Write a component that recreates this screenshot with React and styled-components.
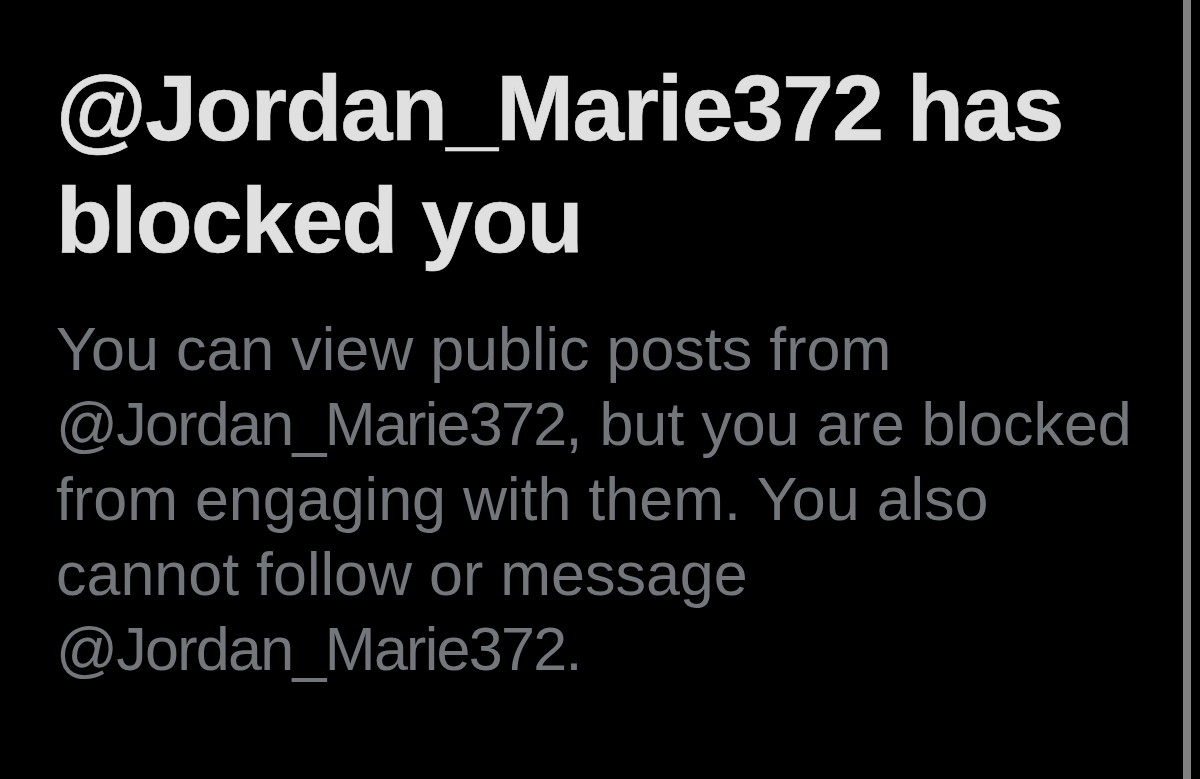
import styled, { createGlobalStyle } from 'styled-components'

const Global = createGlobalStyle`
  html, body {
    margin: 0;
    background: #000;
  }
`

const Page = styled.div`
  display: flex;
  width: 1200px;
  height: 779px;
  background: #000;
  overflow: hidden;
`

const Content = styled.div`
  flex: 1;
  padding: 52px 0 0 56px;
  font-family: 'Liberation Sans', Arial, sans-serif;
`

const Divider = styled.div`
  width: 8px;
  background: #808080;
`

const Edge = styled.div`
  width: 9px;
`

const Title = styled.h1`
  margin: 0;
  font-weight: 700;
  font-size: 93px;
  line-height: 112px;
  letter-spacing: -1.5px;
  color: #e0e0e0;
  -webkit-text-stroke: 0.6px #e0e0e0;
`

const Text = styled.p`
  margin: 36px 0 0;
  font-weight: 400;
  font-size: 61px;
  line-height: 75px;
  color: #73777b;
`

const Handle = styled.span`
  letter-spacing: -1.7px;
`

const App = () => (
  <Page>
    <Global />
    <Content>
      <Title>
        @Jordan_Marie372 has
        <br />
        blocked you
      </Title>
      <Text>
        You can view public posts from
        <br />
        <Handle>@Jordan_Marie372</Handle>, but you are blocked
        <br />
        from engaging with them. You also
        <br />
        cannot follow or message
        <br />
        <Handle>@Jordan_Marie372</Handle>.
      </Text>
    </Content>
    <Divider />
    <Edge />
  </Page>
)

export default App
